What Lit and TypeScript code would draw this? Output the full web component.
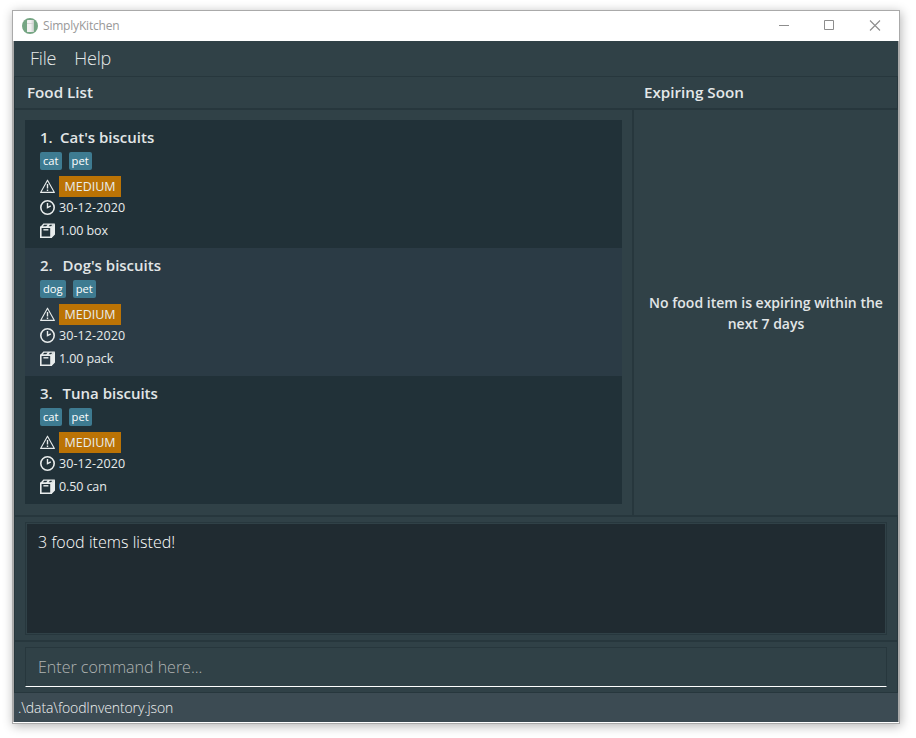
import { LitElement, html, css, svg } from "lit";
import { customElement, property } from "lit/decorators.js";

interface FoodItem {
  name: string;
  tags: string[];
  priority: string;
  expiry: string;
  quantity: string;
}

const items: FoodItem[] = [
  { name: "Cat's biscuits", tags: ["cat", "pet"], priority: "MEDIUM", expiry: "30-12-2020", quantity: "1.00 box" },
  { name: "Dog's biscuits", tags: ["dog", "pet"], priority: "MEDIUM", expiry: "30-12-2020", quantity: "1.00 pack" },
  { name: "Tuna biscuits", tags: ["cat", "pet"], priority: "MEDIUM", expiry: "30-12-2020", quantity: "0.50 can" },
];

const warningIcon = svg`<path d="M7.5 1.2 L14.4 13.4 H0.6 Z" fill="none" stroke="#e8ecec" stroke-width="1.1" stroke-linejoin="round"/><path d="M7.5 5 V9.6 M7.5 10.6 V12" stroke="#e8ecec" stroke-width="1.4"/>`;
const clockIcon = svg`<circle cx="7.5" cy="7.5" r="6.7" fill="none" stroke="#e8ecec" stroke-width="1.6"/><path d="M7.5 3 V7.5 L10.8 5.8" fill="none" stroke="#e8ecec" stroke-width="1.4"/>`;
const boxIcon = svg`<path d="M0.8 4.2 H11 V14.2 H0.8 Z" fill="none" stroke="#e8ecec" stroke-width="1.6"/><path d="M0.2 4 L3.4 0.5 H14.8 L11.4 4 Z M11 4.4 L15 0.5 V11.6 L11.6 15 H11 Z" fill="#e8ecec"/><path d="M2.8 3.2 L4.2 1.7 H7.6 L6.2 3.2 Z M8.6 3.2 L10 1.7 H12.4 L11 3.2 Z" fill="#223239"/><path d="M3.4 6.8 H8.4" stroke="#e8ecec" stroke-width="1.4"/>`;

@customElement("food-card")
export class FoodCard extends LitElement {
  @property({ type: Number }) index = 1;
  @property({ attribute: false }) item!: FoodItem;

  static styles = css`
    :host { display: block; height: 128px; box-sizing: border-box; padding: 7px 15px 0; color: #e8ecec; }
    .title { display: flex; height: 21px; line-height: 21px; font-size: 15px; font-weight: 600; color: #e2e6e7; }
    .number { width: 22.5px; }
    .number.narrow { width: 20px; }
    .tags { display: flex; gap: 7px; height: 18px; margin-top: 4px; }
    .tag { background: #3e7b91; border-radius: 2px; padding: 0 3px; font-size: 11.2px; line-height: 18px; color: #fff; }
    .row { display: flex; align-items: center; font-size: 12.5px; gap: 4px; }
    .row svg { width: 15px; height: 15px; flex: none; }
    .priority { height: 21px; margin-top: 6px; }
    .priority svg { margin-bottom: 1px; }
    .badge { background: #bb7305; height: 21px; line-height: 21px; width: 62px; text-align: center; }
    .expiry { height: 21px; letter-spacing: 0.1px; }
    .quantity { height: 24px; letter-spacing: -0.1px; }
  `;

  render() {
    return html`
      <div class="title"><span class=${this.index === 1 ? "number narrow" : "number"}>${this.index}.</span><span>${this.item.name}</span></div>
      <div class="tags">${this.item.tags.map((t) => html`<span class="tag">${t}</span>`)}</div>
      <div class="row priority"><svg viewBox="0 0 15 15">${warningIcon}</svg><span class="badge">${this.item.priority}</span></div>
      <div class="row expiry"><svg viewBox="0 0 15 15">${clockIcon}</svg><span>${this.item.expiry}</span></div>
      <div class="row quantity"><svg viewBox="0 0 15 15">${boxIcon}</svg><span>${this.item.quantity}</span></div>
    `;
  }
}

@customElement("app-root")
export class AppRoot extends LitElement {
  static styles = css`
    :host { display: block; width: 916px; height: 738px; box-sizing: border-box; padding: 10px 16px 14px 12px; background: #fff; overflow: hidden; font-family: "Open Sans", "Noto Sans", sans-serif; }
    * { box-sizing: border-box; }
    .window { width: 888px; height: 714px; border: 1px solid #aaa; background: #fff; box-shadow: 1px 2px 10px rgba(0, 0, 0, 0.3); display: flex; flex-direction: column; white-space: nowrap; }
    .titlebar { height: 30px; flex: none; display: flex; align-items: center; padding-left: 9px; color: #999; }
    .titlebar .logo { width: 16px; height: 16px; margin-right: 5px; }
    .caption { flex: 1; font-size: 12px; letter-spacing: -0.2px; padding-bottom: 1px; }
    .controls { width: 138px; height: 30px; }
    .frame { flex: none; height: 681px; border: solid #aaa; border-width: 0 1px; background: #304147; display: flex; flex-direction: column; }
    .menu { height: 35px; display: flex; gap: 18px; padding-left: 16px; font-size: 18px; font-weight: 300; letter-spacing: -0.2px; line-height: 35px; color: #e6eaea; }
    .headings { height: 34px; border: solid #27373d; border-width: 1px 1px 2px; display: flex; line-height: 31px; font-size: 15.2px; font-weight: 600; color: #e4e8e9; }
    .headings .left { width: 617px; padding-left: 12px; }
    .headings .right { padding-left: 12px; }
    .lists { height: 405px; display: flex; border-left: 1px solid #27373d; }
    .foods { width: 619px; border-right: 2px solid #27373d; padding: 10px 10px 0; }
    .odd { background: #213138; }
    .even { background: #2b3b45; }
    .soon { flex: 1; display: flex; align-items: center; justify-content: center; text-align: center; font-size: 14px; font-weight: 600; line-height: 21px; color: #e2e6e7; }
    .result { height: 125px; border: solid #27373d; border-width: 2px 1px 0; padding: 5px 10px 0; }
    .output { height: 113px; border: 1px solid #27373d; padding: 1px; }
    .text { height: 109px; background: #202b31; color: #fff; font-size: 16px; font-weight: 300; line-height: 36px; letter-spacing: 0.05px; padding-left: 11px; }
    .command { height: 53px; border: solid #27373d; border-width: 2px 1px 1px; padding: 5px 10px 0; }
    .input { height: 40px; border: 1px solid #27373d; border-bottom-color: #fff; padding-left: 12px; line-height: 38px; font-size: 16px; font-weight: 300; color: #b0b4b3; }
    .status { height: 29px; background: #3c4b53; padding-left: 4px; font-size: 14px; font-weight: 300; letter-spacing: -0.12px; line-height: 29px; color: #f0f2f2; }
  `;

  render() {
    return html`
      <div class="window">
        <div class="titlebar">
          <svg class="logo" viewBox="0 0 16 16"><circle cx="8" cy="8" r="8" fill="#75a583"/><rect x="5" y="2" width="6.5" height="12" rx="0.5" fill="#f1f1f1"/><path d="M9.5 2h2v12h-2z" fill="#dcdcdc"/><path d="M5 5.5h6.5" stroke="#ccc" fill="none" stroke-width="0.7"/></svg>
          <span class="caption">SimplyKitchen</span>
          <svg class="controls" viewBox="0 0 138 30"><path d="M18 14.5h10M63.5 9.5h9v9h-9z" fill="none" stroke="#8d8d8d"/><path d="M109 9.5l10 10M119 9.5l-10 10" fill="none" stroke="#8d8d8d" stroke-width="1.1"/></svg>
        </div>
        <div class="frame">
          <div class="menu"><span>File</span><span>Help</span></div>
          <div class="headings"><span class="left">Food List</span><span class="right">Expiring Soon</span></div>
          <div class="lists">
            <div class="foods">${items.map((item, i) => html`<food-card class=${i % 2 ? "even" : "odd"} .index=${i + 1} .item=${item}></food-card>`)}</div>
            <div class="soon"><div>No food item is expiring within the<br />next 7 days</div></div>
          </div>
          <div class="result"><div class="output"><div class="text">3 food items listed!</div></div></div>
          <div class="command"><div class="input">Enter command here...</div></div>
          <div class="status">.\\data\\foodInventory.json</div>
        </div>
      </div>
    `;
  }
}
